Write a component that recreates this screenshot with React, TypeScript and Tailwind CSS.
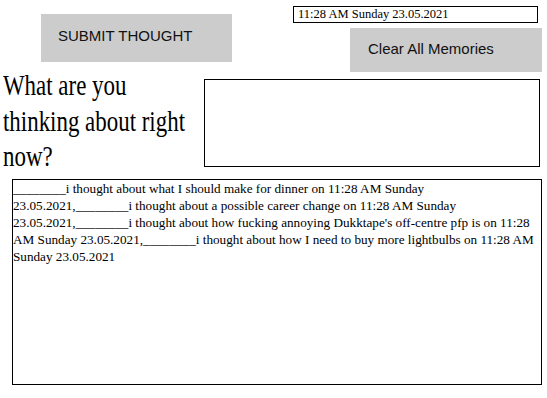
export default function App() {
  const stamp = "11:28 AM Sunday 23.05.2021";
  const thoughts = [
    "i thought about what I should make for dinner",
    "i thought about a possible career change",
    "i thought about how fucking annoying Dukktape's off-centre pfp is",
    "i thought about how I need to buy more lightbulbs",
  ];
  const memories = thoughts.map((t) => `________${t} on ${stamp}`).join(",");

  return (
    <div className="h-[398px] w-[547px] overflow-hidden bg-white font-['Liberation_Serif',serif] text-black">
      {/* top row: submit + clock / clear */}
      <div className="flex items-start">
        <button className="ml-[41px] mt-[14px] flex h-[48px] w-[191px] items-center bg-[#cccccc] pb-[4px] pl-[17px] font-['Liberation_Sans',sans-serif] text-[15px] text-[#111]">
          SUBMIT THOUGHT
        </button>
        <div className="ml-auto mr-[5px] flex flex-col items-end">
          <div className="mr-[4px] mt-[6px] h-[17px] w-[245px] border border-black pl-[4px] text-[12.5px] leading-[15px]">
            {stamp}
          </div>
          <button className="mt-[5px] flex h-[44px] w-[192px] items-center bg-[#cccccc] pb-[2px] pl-[18px] font-['Liberation_Sans',sans-serif] text-[15px] text-[#111]">
            Clear All Memories
          </button>
        </div>
      </div>

      {/* question + input */}
      <div className="-mt-[4px] flex items-start">
        <div className="ml-[3px] w-[201px] shrink-0">
          <h1 className="w-[240px] origin-top-left scale-x-[0.79] text-[29px] font-normal leading-[35.5px]">
            What are you thinking about right now?
          </h1>
        </div>
        <div className="mt-[11px] h-[88px] w-[336px] border border-black" />
      </div>

      {/* memories */}
      <div className="ml-[12px] mt-[4.5px] h-[206px] w-[530px] border border-black text-[13.2px] leading-[17px]">
        {memories}
      </div>
    </div>
  );
}
